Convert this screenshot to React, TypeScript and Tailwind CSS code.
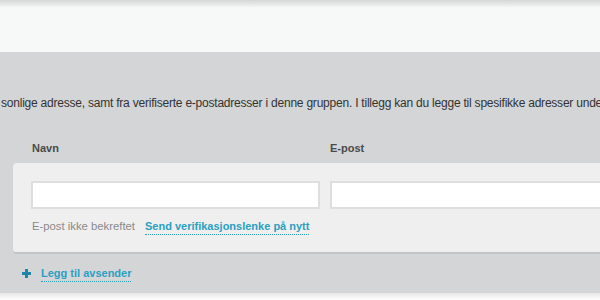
const sans = "font-['Liberation_Sans',Arial,sans-serif]";

export default function App() {
  return (
    <div className={`w-[600px] h-[300px] overflow-hidden bg-white ${sans}`}>
      {/* top bar */}
      <div className="h-[7px] bg-gradient-to-b from-[#d6d6d6] to-[#f2f3f3]" />
      <div className="h-[45px] bg-[#f7f8f8]" />

      {/* main gray area */}
      <div className="h-[241px] bg-[#d4d5d6] pt-[44px]">
        <p className="whitespace-nowrap pl-px text-[12px] leading-[14px] tracking-[-0.22px] text-[#333]">
          sonlige adresse, samt fra verifiserte e-postadresser i denne gruppen. I tillegg kan du legge til spesifikke adresser under
        </p>

        <div className="mt-[32px] flex pl-[32px] text-[11px] font-bold leading-[13px] text-[#4a4a4a]">
          <span className="w-[298px]">Navn</span>
          <span>E-post</span>
        </div>

        <div className="ml-[13px] mt-[8px] w-[620px] rounded-[4px] border-b-2 border-[#c2c3c4] bg-[#efefef] pl-[18px] pt-[18px] pb-[17px]">
          <div className="flex gap-[10px]">
            <input className="h-[28px] w-[289px] border-2 border-[#dedede] bg-white outline-none" />
            <input className="h-[28px] w-[300px] border-2 border-[#dedede] bg-white outline-none" />
          </div>
          <div className="mt-[9px] flex items-baseline gap-[10px] pl-[1px] text-[11px] leading-[16px]">
            <span className="text-[11.3px] text-[#8a8a8a]">E-post ikke bekreftet</span>
            <a className="border-b border-dotted border-[#2aa0c2] font-bold text-[#2aa0c2]">
              Send verifikasjonslenke på nytt
            </a>
          </div>
        </div>

        <div className="mt-[11px] flex items-center pl-[22px] text-[11px] leading-[16px]">
          <svg viewBox="0 0 9 9" className="h-[9px] w-[9px]" aria-hidden="true">
            <path d="M3 0h3v3h3v3H6v3H3V6H0V3h3z" fill="#1f86a8" />
          </svg>
          <a className="ml-[10px] border-b border-dotted border-[#2aa0c2] font-bold text-[#2aa0c2]">
            Legg til avsender
          </a>
        </div>
      </div>

      {/* bottom shadow */}
      <div className="h-[7px] bg-gradient-to-b from-[#e6e6e6] to-white" />
    </div>
  );
}
